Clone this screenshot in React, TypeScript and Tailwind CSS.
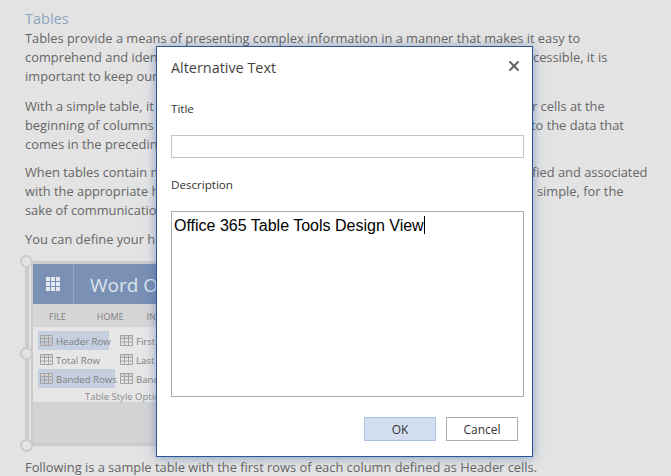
import React from 'react';
import { X } from 'lucide-react';

// each line is what shows left of the dialog plus what shows right of it
const paragraphs = [
  {
    gap: 'mb-[11px]',
    lines: [
      { left: 'comprehend and iden', right: 'cessible, it is', offset: 'ml-[377px]' },
      { left: 'important to keep our', right: '', offset: '' },
    ],
  },
  {
    gap: 'mb-[9px]',
    lines: [
      { left: 'With a simple table, it', right: 'r cells at the', offset: 'ml-[376px]' },
      { left: 'beginning of columns', right: 'to the data that', offset: 'ml-[375px]' },
      { left: 'comes in the precedin', right: '', offset: '' },
    ],
  },
  {
    gap: 'mb-[10px]',
    lines: [
      { left: 'When tables contain m', right: 'fied and associated', offset: 'ml-[376px]' },
      { left: 'with the appropriate h', right: 'simple, for the', offset: 'ml-[381px]' },
      { left: 'sake of communicatio', right: '', offset: '' },
    ],
  },
];

function GridIcon() {
  return (
    <svg width="13" height="11" viewBox="0 0 13 11" stroke="#a3a3a3" className="shrink-0">
      <path d="M.5.5h12v3H.5z" fill="#d4d4d4" />
      <path d="M.5 3.5h12v7H.5zM.5 7h12M4.5.5v10M8.5.5v10" fill="none" />
    </svg>
  );
}

function RibbonOption({ label, className }: { label: string; className?: string }) {
  return (
    <div className={`flex h-[19px] items-center gap-[3px] pl-[2px] ${className ?? ''}`}>
      <GridIcon />
      <span className="whitespace-nowrap pt-px text-[9.6px] text-[#808080]">{label}</span>
    </div>
  );
}

function Screenshot() {
  return (
    <div className="relative mt-[12px] h-[185px] w-[131px]">
      <div className="ml-[6px] h-[185px] overflow-hidden border-y-[3px] border-l-[2px] border-[#cbcbcb] bg-[#d3d3d3]">
        <div className="flex h-[40px] bg-[#7a90b4]">
          <div className="flex w-[41px] shrink-0 items-center justify-center border-r border-[#93a5c3]">
            <div className="grid grid-cols-3 gap-[1px]">
              {Array.from({ length: 9 }).map((_, i) => (
                <span key={i} className="h-[4px] w-[4px] bg-[#e6e9ef]" />
              ))}
            </div>
          </div>
          <div className="whitespace-nowrap pl-[16px] pt-px text-[19px] leading-[40px] text-[#dfe4ec]">Word On</div>
        </div>
        <div className="flex h-[23px] items-center bg-[#d6d6d6] pl-[16px] pt-[2px] text-[9px] text-[#808080]">
          <span>FILE</span>
          <span className="ml-[31px]">HOME</span>
          <span className="ml-[23px]">IN</span>
        </div>
        <div className="h-[75px] bg-[#e6e6e6] pl-[5px] pt-[4px]">
          <div className="flex gap-[3px]">
            <div>
              <RibbonOption label="Header Row" className="w-[71px] bg-[#c5cfdf]" />
              <RibbonOption label="Total Row" className="w-[71px]" />
              <RibbonOption label="Banded Rows" className="w-[77px] bg-[#c5cfdf]" />
            </div>
            <div>
              <RibbonOption label="First" />
              <RibbonOption label="Last" />
              <RibbonOption label="Band" />
            </div>
          </div>
          <div className="whitespace-nowrap pl-[47px] pt-[2px] text-[9.5px] leading-[14px] text-[#8c8c8c]">Table Style Optio</div>
        </div>
      </div>
      <span className="absolute left-0 top-0 h-[185px] w-[4px] bg-[#cbcbcb]" />
      <span className="absolute left-[-5px] top-[-6px] h-[13px] w-[13px] rounded-full border-[2px] border-[#cbcbcb] bg-[#e3e3e3]" />
      <span className="absolute left-[-5px] top-[86px] h-[13px] w-[13px] rounded-full border-[2px] border-[#cbcbcb] bg-[#e3e3e3]" />
      <span className="absolute left-[-5px] top-[178px] h-[13px] w-[13px] rounded-full border-[2px] border-[#cbcbcb] bg-[#e3e3e3]" />
    </div>
  );
}

function AltTextDialog() {
  return (
    <div className="absolute left-[156px] top-[46px] flex h-[411px] w-[377px] flex-col border-[1.5px] border-[#2b579a] bg-white pl-[14px] pr-[8px] shadow-[0_1px_10px_rgba(43,87,154,0.5)]">
      <div className="flex items-start justify-between pr-[2px] pt-[9px]">
        <h2 className="text-[14.4px] leading-[24px] text-[#444]">Alternative Text</h2>
        <X size={16} strokeWidth={3} className="mt-[2px] text-[#666]" />
      </div>
      <label className="mt-[20px] text-[11.6px] leading-[18px] text-[#333]">Title</label>
      <input className="mt-[17px] h-[23px] w-full border border-[#c4c4c4] bg-white" />
      <label className="mt-[18px] text-[11.6px] leading-[18px] text-[#333]">Description</label>
      <div className="mt-[17px] h-[186px] w-full border border-[#ababab] pl-[2px] pt-px font-['Liberation_Sans',sans-serif] text-[16px] leading-[22px] text-black">
        Office 365 Table Tools Design View
        <span className="inline-block h-[18px] w-px translate-y-[3px] bg-black" />
      </div>
      <div className="mt-[20px] flex justify-end gap-[10px] pr-[6px]">
        <button className="h-[24px] w-[72px] border border-[#a6c0e3] bg-[#d3dff0] text-[12px] text-[#333]">OK</button>
        <button className="h-[24px] w-[72px] border border-[#ababab] bg-white text-[12px] text-[#333]">Cancel</button>
      </div>
    </div>
  );
}

export default function App() {
  return (
    <div className="relative h-[476px] w-[671px] overflow-hidden bg-[#e3e3e3] pl-[25px] pt-[8px] font-['Open_Sans',sans-serif] text-[12.85px] leading-[19px] text-[#666]">
      <h1 className="text-[14.5px] leading-[21px] text-[#8fa3c0]">Tables</h1>
      <div className="whitespace-nowrap">Tables provide a means of presenting complex information in a manner that makes it easy to</div>
      {paragraphs.map((para, i) => (
        <div key={i} className={para.gap}>
          {para.lines.map((line) => (
            <div key={line.left} className="flex whitespace-nowrap">
              <span className="w-[131px] shrink-0">{line.left}</span>
              {line.right && <span className={line.offset}>{line.right}</span>}
            </div>
          ))}
        </div>
      ))}
      <div className="w-[131px] whitespace-nowrap">You can define your h</div>
      <Screenshot />
      <p className="mt-[12px] whitespace-nowrap">Following is a sample table with the first rows of each column defined as Header cells.</p>
      <AltTextDialog />
    </div>
  );
}
